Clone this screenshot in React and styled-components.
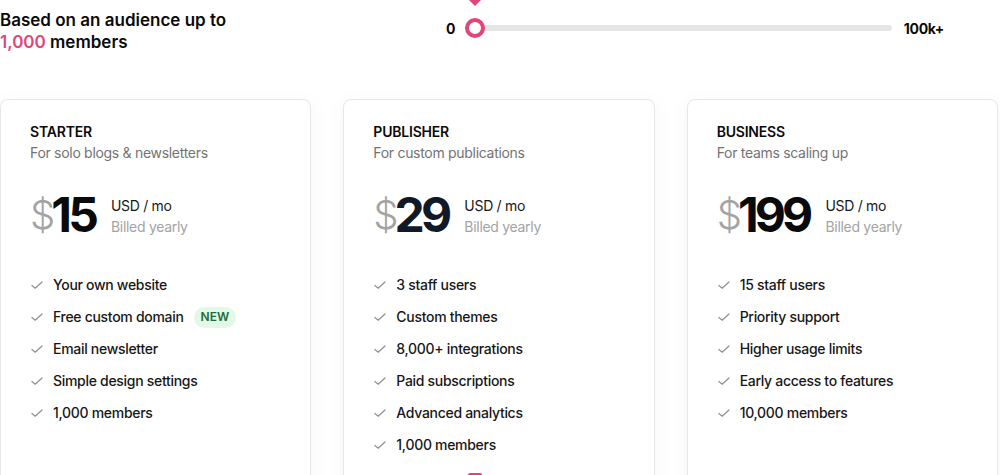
import React from "react";
import styled, { createGlobalStyle } from "styled-components";

const GlobalStyle = createGlobalStyle`
  html, body {
    margin: 0;
    padding: 0;
    background: #ffffff;
    overflow: hidden;
  }
  body {
    font-family: Inter, "Noto Sans", "Liberation Sans", sans-serif;
    color: #0a0a0a;
    -webkit-font-smoothing: antialiased;
  }
`;

const PINK = "#e0457b";

const Page = styled.div`
  width: 998px;
  padding-top: 9px;
`;

const TopRow = styled.div`
  display: flex;
  align-items: flex-start;
  justify-content: space-between;
  padding-right: 54px;
`;

const Heading = styled.h2`
  margin: 0;
  font-size: 17px;
  line-height: 22px;
  font-weight: 600;
  color: #0a0a0a;
`;

const Accent = styled.span`
  color: ${PINK};
`;

const Slider = styled.div`
  width: 498px;
  height: 38px;
  display: flex;
  align-items: center;
`;

const SliderLabel = styled.span`
  font-size: 14px;
  font-weight: 700;
  letter-spacing: -0.3px;
  color: #0a0a0a;
`;

const Track = styled.div`
  flex: 1;
  height: 6px;
  border-radius: 3px;
  background: #e5e5e5;
  margin: 0 12px 0 10px;
  position: relative;
`;

const Thumb = styled.div`
  position: absolute;
  left: 0;
  top: 50%;
  width: 20px;
  height: 20px;
  box-sizing: border-box;
  border-radius: 50%;
  border: 4px solid ${PINK};
  background: #fff;
  transform: translateY(-50%);
`;

const Tooltip = styled.div`
  position: absolute;
  bottom: calc(100% + 22px);
  left: 50%;
  transform: translateX(-50%);
  width: 48px;
  height: 28px;
  background: ${PINK};
  border-radius: 6px;

  &::after {
    content: "";
    position: absolute;
    top: 100%;
    left: 50%;
    margin-left: -6px;
    border-left: 6px solid transparent;
    border-right: 6px solid transparent;
    border-top: 6px solid ${PINK};
  }
`;

const Cards = styled.div`
  margin-top: 46px;
  display: grid;
  grid-template-columns: repeat(3, 1fr);
  gap: 32px;
`;

const Card = styled.div`
  box-sizing: border-box;
  min-height: 420px;
  padding: 22px 29px 30px;
  border: 1px solid #e7e7e7;
  border-radius: 8px;
  background: #fff;
  box-shadow: 0 4px 24px rgba(0, 0, 0, 0.04);
  display: flex;
  flex-direction: column;
`;

const PlanName = styled.div`
  font-size: 14px;
  line-height: 20px;
  font-weight: 600;
  letter-spacing: -0.2px;
  color: #0a0a0a;
`;

const PlanDesc = styled.div`
  font-size: 14px;
  line-height: 21px;
  letter-spacing: -0.3px;
  color: #737373;
`;

const PriceRow = styled.div`
  display: flex;
  align-items: center;
  margin-top: 27px;
`;

const Amount = styled.div`
  display: flex;
  align-items: center;
  height: 50px;
`;

const Dollar = styled.span`
  font-size: 40px;
  font-weight: 300;
  color: #a3a3a3;
  line-height: 1;
  letter-spacing: -4px;
`;

const Number = styled.span`
  font-size: 48px;
  font-weight: 700;
  letter-spacing: -0.08em;
  line-height: 1;
  color: ${(p) => (p.$highlight ? "#111827" : "#0a0a0a")};
`;

const Period = styled.div`
  margin-left: 16px;
  display: flex;
  flex-direction: column;
  font-size: 14px;
  line-height: 21px;
  letter-spacing: -0.3px;
  margin-top: 2px;
`;

const Unit = styled.span`
  color: #171717;
`;

const Billed = styled.span`
  color: #a3a3a3;
`;

const Features = styled.ul`
  list-style: none;
  margin: 34px 0 0;
  padding: 0 0 0 1px;
  display: flex;
  flex-direction: column;
  gap: 10px;
`;

const Feature = styled.li`
  display: flex;
  align-items: center;
  gap: 10px;
  font-size: 14px;
  line-height: 22px;
  font-weight: 500;
  letter-spacing: -0.3px;
  color: #171717;
`;

const Badge = styled.span`
  padding: 0 7px;
  height: 21px;
  display: inline-flex;
  align-items: center;
  border-radius: 11px;
  background: #e3f8e7;
  color: #1f6b3c;
  font-size: 12px;
  font-weight: 600;
  letter-spacing: 0;
`;

const PopularMark = styled.div`
  margin: 17px 0 0 95px;
  width: 14px;
  height: 10px;
  border-radius: 2px 2px 0 0;
  background: ${PINK};
`;

const Check = () => (
  <svg width="12" height="12" viewBox="0 0 12 12" fill="none">
    <path
      d="M1 6.5 L4.2 9.2 L11 3"
      stroke="#8f8f8f"
      strokeWidth="1.2"
      strokeLinecap="round"
      strokeLinejoin="round"
    />
  </svg>
);

const plans = [
  {
    name: "STARTER",
    desc: "For solo blogs & newsletters",
    price: "15",
    features: [
      { text: "Your own website" },
      { text: "Free custom domain", badge: "NEW" },
      { text: "Email newsletter" },
      { text: "Simple design settings" },
      { text: "1,000 members" },
    ],
  },
  {
    name: "PUBLISHER",
    desc: "For custom publications",
    price: "29",
    highlight: true,
    features: [
      { text: "3 staff users" },
      { text: "Custom themes" },
      { text: "8,000+ integrations" },
      { text: "Paid subscriptions" },
      { text: "Advanced analytics" },
      { text: "1,000 members" },
    ],
  },
  {
    name: "BUSINESS",
    desc: "For teams scaling up",
    price: "199",
    features: [
      { text: "15 staff users" },
      { text: "Priority support" },
      { text: "Higher usage limits" },
      { text: "Early access to features" },
      { text: "10,000 members" },
    ],
  },
];

const App = () => {
  return (
    <>
      <GlobalStyle />
      <Page>
        <TopRow>
          <Heading>
            Based on an audience up to
            <br />
            <Accent>1,000</Accent> members
          </Heading>
          <Slider>
            <SliderLabel>0</SliderLabel>
            <Track>
              <Thumb>
                <Tooltip />
              </Thumb>
            </Track>
            <SliderLabel>100k+</SliderLabel>
          </Slider>
        </TopRow>

        <Cards>
          {plans.map((plan) => (
            <Card key={plan.name}>
              <PlanName>{plan.name}</PlanName>
              <PlanDesc>{plan.desc}</PlanDesc>
              <PriceRow>
                <Amount>
                  <Dollar>$</Dollar>
                  <Number $highlight={plan.highlight}>{plan.price}</Number>
                </Amount>
                <Period>
                  <Unit>USD / mo</Unit>
                  <Billed>Billed yearly</Billed>
                </Period>
              </PriceRow>
              <Features>
                {plan.features.map((f) => (
                  <Feature key={f.text}>
                    <Check />
                    {f.text}
                    {f.badge && <Badge>{f.badge}</Badge>}
                  </Feature>
                ))}
              </Features>
              {plan.highlight && <PopularMark />}
            </Card>
          ))}
        </Cards>
      </Page>
    </>
  );
};

export default App;
